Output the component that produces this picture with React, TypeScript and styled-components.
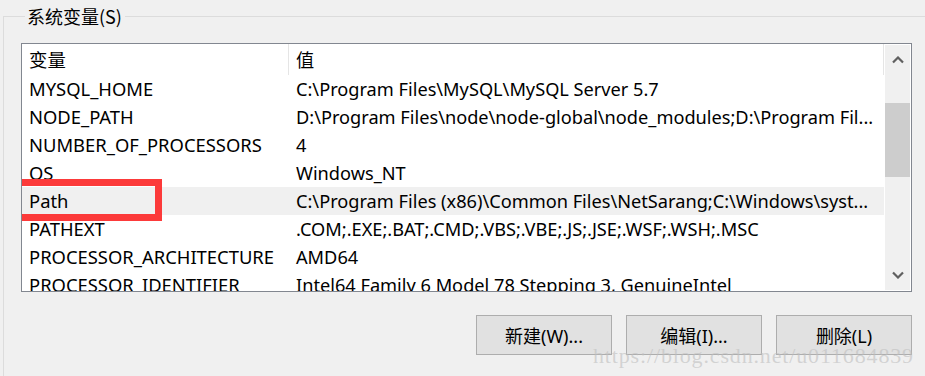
import styled, { createGlobalStyle } from 'styled-components';

const GlobalStyle = createGlobalStyle`
    html, body {
        margin: 0;
        padding: 0;
        background: #f0f0f0;
        overflow: hidden;
    }
    body {
        width: 925px;
        height: 376px;
        font-family: "Noto Sans", "Noto Sans CJK SC", sans-serif;
        color: #000;
    }
`;

const rows = [
    { name: 'MYSQL_HOME', value: 'C:\\Program Files\\MySQL\\MySQL Server 5.7' },
    { name: 'NODE_PATH', value: 'D:\\Program Files\\node\\node-global\\node_modules;D:\\Program Fil...' },
    { name: 'NUMBER_OF_PROCESSORS', value: '4' },
    { name: 'OS', value: 'Windows_NT' },
    { name: 'Path', value: 'C:\\Program Files (x86)\\Common Files\\NetSarang;C:\\Windows\\syst...', marked: true },
    { name: 'PATHEXT', value: '.COM;.EXE;.BAT;.CMD;.VBS;.VBE;.JS;.JSE;.WSF;.WSH;.MSC' },
    { name: 'PROCESSOR_ARCHITECTURE', value: 'AMD64' },
    { name: 'PROCESSOR_IDENTIFIER', value: 'Intel64 Family 6 Model 78 Stepping 3, GenuineIntel' },
];

const Chevron = ({ down }: { down?: boolean }) => (
    <svg width="12" height="8" viewBox="0 0 12 8">
        <path
            d={down ? 'M1 1.5 L6 6.5 L11 1.5' : 'M1 6.5 L6 1.5 L11 6.5'}
            fill="none"
            stroke="#606060"
            strokeWidth="2.2"
        />
    </svg>
);

const App = () => {
    return (
        <>
            <GlobalStyle />
            <Group>
                <Legend>系统变量(S)</Legend>
                <ListBox>
                    <Table>
                        <HeaderRow>
                            <NameCell $header>变量</NameCell>
                            <ValueCell $header>值</ValueCell>
                        </HeaderRow>
                        {rows.map((r) => (
                            <Row key={r.name} $selected={r.marked}>
                                <NameCell>
                                    {r.name}
                                    {r.marked && <Marker />}
                                </NameCell>
                                <ValueCell>{r.value}</ValueCell>
                            </Row>
                        ))}
                    </Table>
                    <ScrollBar>
                        <ArrowButton><Chevron /></ArrowButton>
                        <Track>
                            <Thumb />
                        </Track>
                        <ArrowButton><Chevron down /></ArrowButton>
                    </ScrollBar>
                </ListBox>
                <Buttons>
                    <DialogButton>新建(W)...</DialogButton>
                    <DialogButton>编辑(I)...</DialogButton>
                    <DialogButton>删除(L)</DialogButton>
                </Buttons>
            </Group>
            <Watermark>https://blog.csdn.net/u011684839</Watermark>
        </>
    );
};

export default App;

// group box runs off the right and bottom edges of the window
const Group = styled.fieldset`
    margin: 4px 0 0 3px;
    padding: 15px 0 0 17px;
    width: 922px;
    height: 372px;
    box-sizing: border-box;
    border: 1px solid #dcdcdc;
    border-right: none;
    border-bottom: none;
    min-width: 0;
`;

const Legend = styled.legend`
    margin-left: 4px;
    padding: 0 3px 0 2px;
    font-size: 18px;
    line-height: 24px;
    font-family: "Noto Sans CJK SC", sans-serif;
`;

const ListBox = styled.div`
    display: flex;
    width: 891px;
    height: 249px;
    box-sizing: border-box;
    border: 1px solid #828790;
    background: #fff;
`;

const Table = styled.div`
    width: 862px;
    display: flex;
    flex-direction: column;
    overflow: hidden;
`;

const HeaderRow = styled.div`
    display: flex;
    height: 31px;
    align-items: center;
    flex-shrink: 0;
`;

const Row = styled.div<{ $selected?: boolean }>`
    display: flex;
    height: 28px;
    align-items: center;
    flex-shrink: 0;
    background: ${(p) => (p.$selected ? '#f0f0f0' : 'transparent')};
`;

const NameCell = styled.div<{ $header?: boolean }>`
    position: relative;
    box-sizing: border-box;
    width: 267px;
    flex-shrink: 0;
    height: 100%;
    display: flex;
    align-items: center;
    padding: 0 0 1px 7px;
    font-size: 18.4px;
    white-space: nowrap;
    border-right: 1px solid ${(p) => (p.$header ? '#e5e5e5' : 'transparent')};
    font-family: ${(p) => (p.$header ? '"Noto Sans CJK SC", sans-serif' : 'inherit')};
`;

const ValueCell = styled.div<{ $header?: boolean }>`
    flex: 1;
    box-sizing: border-box;
    height: 100%;
    display: flex;
    align-items: center;
    padding: 0 0 1px 7px;
    font-size: 18.2px;
    white-space: nowrap;
    overflow: hidden;
    border-right: 1px solid ${(p) => (p.$header ? '#e5e5e5' : 'transparent')};
    font-family: ${(p) => (p.$header ? '"Noto Sans CJK SC", sans-serif' : 'inherit')};
`;

const Marker = styled.div`
    position: absolute;
    left: -7px;
    top: -8px;
    width: 147px;
    height: 42px;
    box-sizing: border-box;
    border: 7px solid #fc3a3a;
`;

const ScrollBar = styled.div`
    width: 25px;
    margin: 1px;
    background: #f0f0f0;
    display: flex;
    flex-direction: column;
`;

const ArrowButton = styled.div`
    height: 30px;
    display: flex;
    align-items: center;
    justify-content: center;
`;

const Track = styled.div`
    flex: 1;
`;

const Thumb = styled.div`
    margin-top: 28px;
    height: 74px;
    background: #cdcdcd;
`;

const Buttons = styled.div`
    display: flex;
    justify-content: flex-end;
    gap: 14px;
    width: 891px;
    margin-top: 23px;
`;

const DialogButton = styled.button`
    width: 136px;
    height: 40px;
    box-sizing: border-box;
    border: 1px solid #adadad;
    background: #e1e1e1;
    font-size: 18px;
    font-family: "Noto Sans", "Noto Sans CJK SC", sans-serif;
    color: #000;
    padding: 0;
`;

const Watermark = styled.div`
    position: absolute;
    left: 593px;
    top: 343px;
    font-family: "Liberation Serif", serif;
    font-size: 22px;
    letter-spacing: 0.85px;
    color: rgba(190, 190, 190, 0.6);
    pointer-events: none;
`;
